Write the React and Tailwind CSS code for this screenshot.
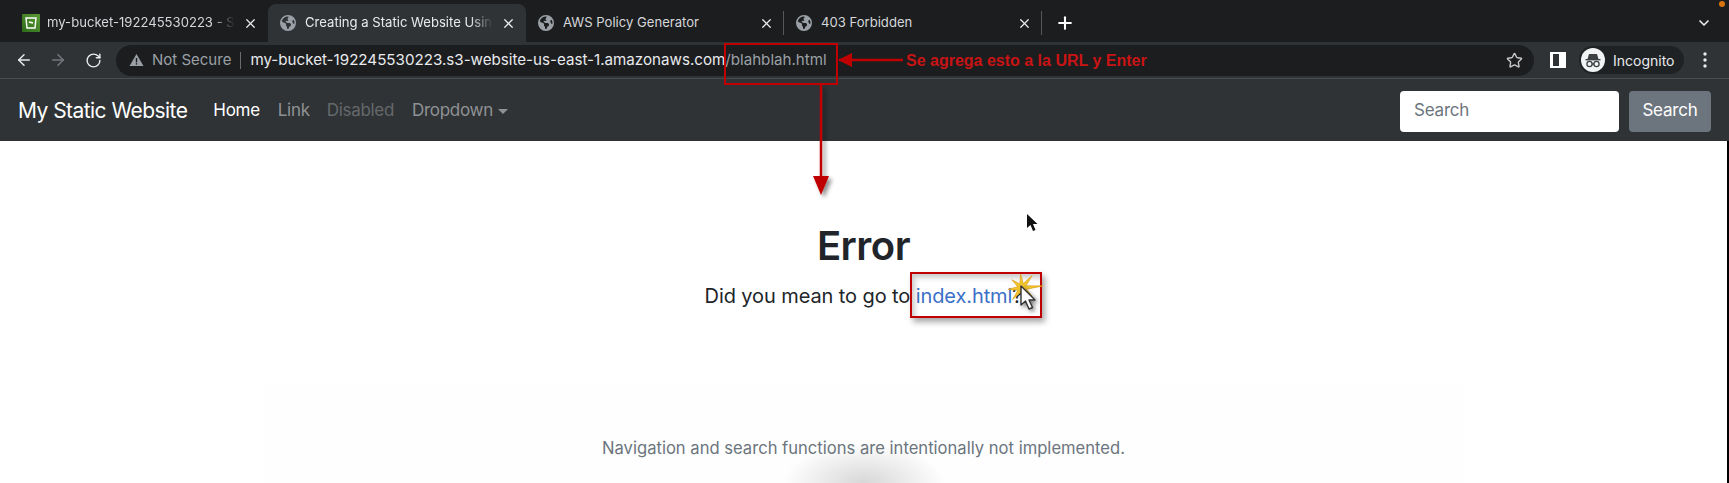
import React from "react";
import { ArrowLeft, ArrowRight, RotateCw, Star, X, Plus, ChevronDown } from "lucide-react";
import { FaEarthAmericas } from "react-icons/fa6";

function Bucket() {
  return (
    <svg width="18" height="18" viewBox="0 0 18 18" className="shrink-0">
      <defs>
        <linearGradient id="g" x1="0" y1="1" x2="1" y2="0">
          <stop offset="0" stopColor="#2f6b1c" />
          <stop offset="1" stopColor="#5a9b35" />
        </linearGradient>
      </defs>
      <rect width="18" height="18" rx="1" fill="url(#g)" />
      <path d="M4 4h10l-1 10H5z" fill="none" stroke="#fff" strokeWidth="1.4" />
      <path d="M7 8l4 1" stroke="#fff" strokeWidth="1.4" />
    </svg>
  );
}

function Tab({ icon, title, active, sep, fade }) {
  return (
    <div className={`relative flex h-[38px] w-[258px] shrink-0 items-center pl-3 pr-[10px] ${active ? "rounded-t-lg bg-[#2f3336]" : ""}`}>
      <div className="flex w-[25px] shrink-0 items-center">{icon}</div>
      <span className={`min-w-0 flex-1 whitespace-nowrap text-[13.1px] ${active ? "text-[#e8eaed]" : "text-[#d5d7da]"} ${fade ? "[mask-image:linear-gradient(to_right,black_88%,transparent_100%)]" : ""}`}>{title}</span>
      <X size={15} strokeWidth={2} className="ml-2 shrink-0 text-[#e8eaed]" />
      {sep && <div className="absolute right-0 top-[7px] h-[24px] w-px bg-[#54575b]" />}
    </div>
  );
}

function Globe() {
  return <FaEarthAmericas size={16} className="text-[#9aa0a6]" />;
}

function Incognito() {
  return (
    <svg width="24" height="24" viewBox="0 0 24 24" className="shrink-0">
      <circle cx="12" cy="12" r="12" fill="#f1f3f4" />
      <path d="M8 6h8l1.5 5h-11z" fill="#3c4043" />
      <rect x="4.5" y="11" width="15" height="1.4" fill="#3c4043" />
      <circle cx="8.5" cy="16" r="2.6" fill="none" stroke="#3c4043" strokeWidth="1.3" />
      <circle cx="15.5" cy="16" r="2.6" fill="none" stroke="#3c4043" strokeWidth="1.3" />
      <path d="M11 16h2" stroke="#3c4043" strokeWidth="1.3" />
    </svg>
  );
}

function Burst() {
  const radii = [21, 16, 14, 13, 14, 15, 11, 13];
  const pts = [];
  radii.forEach((r, i) => {
    const a = (i * Math.PI) / 4 + 0.1;
    const b = a + Math.PI / 8;
    pts.push(`${22 + r * Math.cos(a)},${17 - r * Math.sin(a)}`);
    pts.push(`${22 + 4.6 * Math.cos(b)},${17 - 4.6 * Math.sin(b)}`);
  });
  return (
    <svg className="absolute left-[1000px] top-[271px] overflow-visible" width="44" height="32" viewBox="0 0 44 32">
      <polygon points={pts.join(" ")} fill="#f3c62f" stroke="#d9a116" strokeWidth="0.7" />
    </svg>
  );
}

function Annotations() {
  return (
    <>
      <div className="absolute left-[724px] top-[43px] h-[42px] w-[114px] border-2 border-[#c00000]" />
      <svg className="absolute left-[800px] top-[40px] overflow-visible" width="110" height="40">
        <path d="M39 20 L103 20" stroke="#c00000" strokeWidth="2.5" />
        <path d="M38 20 L52 13 L52 27 Z" fill="#c00000" />
      </svg>
      <span className="absolute left-[906px] top-[51px] whitespace-nowrap font-['Liberation_Sans',sans-serif] text-[16px] font-bold leading-[20px] text-[#c81414]">Se agrega esto a la URL y Enter</span>
      <svg className="absolute left-[800px] top-[85px] overflow-visible" width="44" height="115">
        <defs>
          <filter id="s" x="-100%" y="-10%" width="300%" height="130%">
            <feDropShadow dx="3" dy="3" stdDeviation="2" floodColor="#000" floodOpacity="0.45" />
          </filter>
        </defs>
        <g filter="url(#s)">
          <path d="M21 0 V92" stroke="#c00000" strokeWidth="2.5" />
          <path d="M13 91 H29 L21 110 Z" fill="#c00000" />
        </g>
      </svg>
      <svg className="absolute left-[1024px] top-[212px]" width="16" height="22" viewBox="0 0 16 22">
        <path d="M3 2 L3 16 L6.5 13 L9 19 L11.5 18 L9 12 L13.5 12 Z" fill="#111" />
      </svg>
      <div className="absolute left-[910px] top-[272px] h-[46px] w-[132px] border-2 border-[#c00000] shadow-[3px_4px_6px_rgba(0,0,0,0.35),inset_3px_4px_5px_rgba(0,0,0,0.2)]" />
      <Burst />
      <svg className="absolute left-[1018px] top-[284px] overflow-visible" width="20" height="30" viewBox="0 0 20 30">
        <path d="M3 2 L3 21 L7.5 17 L11 25 L14.5 23.5 L11 16 L17 16 Z" fill="#fff" stroke="#333" strokeWidth="1.4" strokeLinejoin="round" style={{ filter: "drop-shadow(2px 2px 2px rgba(0,0,0,.5))" }} />
      </svg>
    </>
  );
}

export default function App() {
  return (
    <div className="relative flex h-[483px] w-[1729px] flex-col overflow-hidden bg-white font-['Inter',sans-serif]">
      {/* tab strip */}
      <div className="relative flex h-[42px] shrink-0 items-end bg-[#1c1d1f] pl-[10px]">
        <Tab icon={<Bucket />} title="my-bucket-192245530223 - S" fade />
        <Tab icon={<Globe />} title="Creating a Static Website Using" active fade />
        <Tab icon={<Globe />} title="AWS Policy Generator" sep />
        <Tab icon={<Globe />} title="403 Forbidden" sep />
        <Plus size={20} strokeWidth={2.5} className="mb-[9px] ml-[13px] text-white" />
        <ChevronDown size={16} strokeWidth={2.5} className="mb-[11px] ml-auto mr-[17px] text-[#e8eaed]" />
        <span className="absolute right-[4px] top-[1px] h-[6px] w-[6px] rounded-full bg-[#d9730d]" />
      </div>
      {/* toolbar */}
      <div className="flex h-[37px] shrink-0 items-center border-b border-[#4a4e51] bg-[#2f3336] pl-[15px] pr-[16px]">
        <ArrowLeft size={18} className="text-[#e8eaed]" />
        <ArrowRight size={18} className="ml-[16px] text-[#75797d]" />
        <RotateCw size={17} className="ml-[18px] text-[#e8eaed]" />
        <div className="ml-[14px] flex h-[31px] flex-1 items-center rounded-full bg-[#1c1d1f] pl-[13px] pr-[11px]">
          <svg width="15" height="14" viewBox="0 0 15 14" className="shrink-0">
            <path d="M7.5 1 L14.5 13 H0.5 Z" fill="#9aa0a6" />
            <rect x="6.8" y="5" width="1.4" height="4.4" fill="#1c1d1f" />
            <rect x="6.8" y="10.2" width="1.4" height="1.4" fill="#1c1d1f" />
          </svg>
          <span className="ml-[8px] text-[15px] text-[#9aa0a6]">Not Secure</span>
          <span className="mx-[9px] h-[17px] w-px bg-[#6a6d70]" />
          <span className="whitespace-nowrap text-[15.15px] text-[#e8eaed]">my-bucket-192245530223.s3-website-us-east-1.amazonaws.com<span className="text-[#9aa0a6]">/blahblah.html</span></span>
          <Star size={17} className="ml-auto text-[#c4c7ca]" />
        </div>
        <div className="ml-[16px] h-[16px] w-[16px] shrink-0 border-2 border-l-[3px] border-r-[7px] border-white bg-[#2f3336]" />
        <div className="ml-[13px] flex h-[28px] w-[105px] shrink-0 items-center rounded-full bg-[#1f2224] pl-[2px]">
          <Incognito />
          <span className="ml-[8px] text-[14px] text-[#e8eaed]">Incognito</span>
        </div>
        <svg width="16" height="18" viewBox="0 0 16 18" className="ml-[13px] shrink-0">
          <circle cx="8" cy="3" r="1.7" fill="#e8eaed" />
          <circle cx="8" cy="9" r="1.7" fill="#e8eaed" />
          <circle cx="8" cy="15" r="1.7" fill="#e8eaed" />
        </svg>
      </div>
      {/* navbar */}
      <nav className="flex h-[62px] shrink-0 items-center bg-[#2f3336] pl-[18px] pr-[18px] pt-[2px]">
        <span className="text-[21px] tracking-[-0.55px] text-white">My Static Website</span>
        <span className="ml-[26px] text-[17px] tracking-[-0.3px] text-white">Home</span>
        <span className="ml-[18px] text-[17px] tracking-[-0.3px] text-[#8f9295]">Link</span>
        <span className="ml-[17px] text-[17px] tracking-[-0.3px] text-[#65686b]">Disabled</span>
        <span className="ml-[18px] text-[17px] tracking-[-0.3px] text-[#8f9295]">Dropdown</span>
        <span className="ml-[5px] h-0 w-0 border-x-[5px] border-t-[5px] border-x-transparent border-t-[#8f9295]" />
        <div className="ml-auto flex h-[41px] w-[219px] items-center rounded-[4px] bg-white pl-[14px] text-[17px] tracking-[-0.2px] text-[#6c757d]">Search</div>
        <div className="ml-[10px] flex h-[41px] w-[82px] items-center justify-center rounded-[4px] bg-[#6c757d] text-[17px] tracking-[-0.2px] text-white">Search</div>
      </nav>
      {/* page */}
      <main className="flex min-h-0 flex-1 flex-col items-center border-r-2 border-black bg-white">
        <h1 className="mt-[79px] text-[40px] font-semibold leading-[52px] tracking-[-0.5px] text-[#212529]">Error</h1>
        <p className="mt-[10px] text-[20px] leading-[28px] tracking-[-0.1px] text-[#212529]">Did you mean to go to <a className="text-[#3a70c7]">index.html</a>?</p>
        <div className="mt-[74px] flex w-[1200px] flex-1 flex-col items-center bg-[radial-gradient(ellipse_80px_40px_at_50%_100%,#d6d7d6,#fdfefd)] pt-[54px]">
          <p className="text-[16.6px] leading-[20px] text-[#6c757d]">Navigation and search functions are intentionally not implemented.</p>
        </div>
      </main>
      <Annotations />
    </div>
  );
}
